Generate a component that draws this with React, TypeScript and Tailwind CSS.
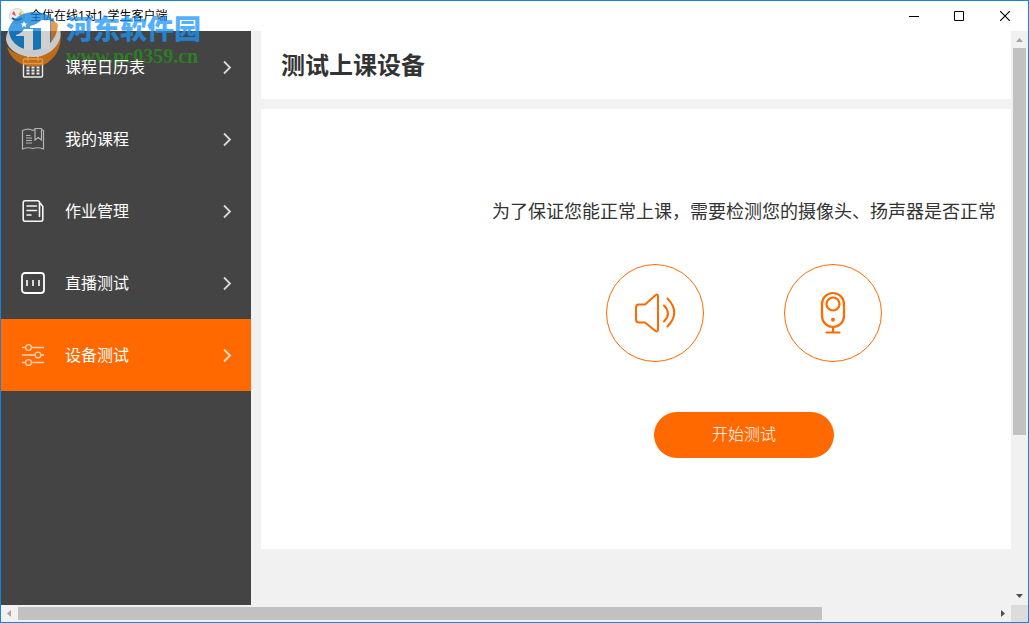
import type { ReactNode } from "react";

const icon = "h-6 w-6 shrink-0 fill-none stroke-current";

function CalendarIcon() {
  return (
    <svg viewBox="0 0 24 24" className={icon} strokeWidth="1.4" opacity="0.9" aria-hidden="true">
      <rect x="2.500" y="4" width="19" height="18" rx="1" />
      <path d="M2.500 8.500H21.500M7 1V6M17 1V6" />
      <path d="M5.500 12.500H8.500M10.500 12.500H13.500M15.500 12.500H18.500M5.500 15.500H8.500M10.500 15.500H13.500M15.500 15.500H18.500M5.500 18.500H8.500M10.500 18.500H13.500M15.500 18.500H18.500" strokeWidth="2" />
    </svg>
  );
}

function BookIcon() {
  return (
    <svg viewBox="0 0 24 24" className={icon} strokeWidth="1.200" opacity="0.6" aria-hidden="true">
      <path d="M12 3.500C9 1.500 5 1.800 1.500 3.500V22C5 20.500 9 20.500 12 21.500C15 20.500 19 20.500 22.500 22V3.500L20.500 2.500M12 3.500L14 2.500" />
      <path d="M14 1.500H20.500V13L17.200 10.500L14 13Z" />
      <path d="M5 8.500H9.500M5 11H11M5 13.500H11M5 16H11" />
    </svg>
  );
}

function HomeworkIcon() {
  return (
    <svg viewBox="0 0 24 24" className={icon} strokeWidth="1.600" strokeLinecap="round" opacity="0.95" aria-hidden="true">
      <path d="M18.500 17.500V3.500Q18.500 1.800 16.500 1.800H4Q2.200 1.800 2.200 3.800V20.200Q2.200 22.200 4 22.200H20Q21.800 22.200 21.800 20.500V7.500L19 4" />
      <path d="M6 7H15.500M6 11.500H15.500M6 16H10" />
    </svg>
  );
}

function LiveIcon() {
  return (
    <svg viewBox="0 0 24 24" className={icon} aria-hidden="true">
      <rect x="1" y="2" width="22" height="20" rx="3" strokeWidth="1.800" />
      <path d="M6 9V15M12 9V15M18 9V15" strokeWidth="2" opacity="0.8" />
    </svg>
  );
}

function SlidersIcon() {
  return (
    <svg viewBox="0 0 24 24" className={icon} strokeWidth="1.300" opacity="0.7" aria-hidden="true">
      <path d="M1 4.500H5M10.500 4.500H23M1 12H14M19.500 12H23M1 19.500H5M10.500 19.500H23" />
      <circle cx="7.500" cy="4.500" r="2.900" />
      <circle cx="17" cy="12" r="2.900" />
      <circle cx="7.500" cy="19.500" r="2.900" />
    </svg>
  );
}

const items: { label: string; icon: ReactNode; active?: boolean }[] = [
  { label: "课程日历表", icon: <CalendarIcon /> },
  { label: "我的课程", icon: <BookIcon /> },
  { label: "作业管理", icon: <HomeworkIcon /> },
  { label: "直播测试", icon: <LiveIcon /> },
  { label: "设备测试", icon: <SlidersIcon />, active: true },
];

function TitleBar() {
  return (
    <header className="flex h-[30px] shrink-0 items-center bg-white pl-2">
      <svg viewBox="0 0 16 16" className="h-4 w-4" aria-hidden="true">
        <circle cx="8" cy="8" r="7.500" fill="#eeeeee" stroke="#d5d5d5" />
        <path d="M3 6L7 8L5 3Z" fill="#e5463c" />
        <path d="M9 6L13 3L12 8Z" fill="#f2b632" />
        <path d="M3 10Q8 14 13 10" stroke="#31548f" strokeWidth="2" fill="none" />
      </svg>
      <span className="ml-[5px] font-['Noto_Sans','Noto_Sans_CJK_SC',sans-serif] text-xs text-black">全优在线1对1-学生客户端</span>
      <div className="ml-auto flex h-full">
        <button type="button" aria-label="最小化" className="flex w-11 items-center justify-center">
          <svg viewBox="0 0 10 10" className="h-2.5 w-2.5" aria-hidden="true"><path d="M0 5.500H10" stroke="#000" /></svg>
        </button>
        <button type="button" aria-label="最大化" className="flex w-[46px] items-center justify-center">
          <svg viewBox="0 0 10 10" className="h-2.5 w-2.5" aria-hidden="true"><path d="M.5.5H9.500V9.500H.5Z" stroke="#000" fill="none" /></svg>
        </button>
        <button type="button" aria-label="关闭" className="flex w-[46px] items-center justify-center">
          <svg viewBox="0 0 10 10" className="h-2.5 w-2.5" aria-hidden="true"><path d="M0 0L10 10M10 0L0 10" stroke="#000" strokeWidth="1.200" /></svg>
        </button>
      </div>
    </header>
  );
}

function Watermark() {
  return (
    <div className="pointer-events-none absolute top-2 left-1 flex opacity-75">
      <svg viewBox="0 0 60 60" className="h-[60px] w-[60px] shrink-0" aria-hidden="true">
        <path d="M2 28C3 12 15 3 29 3C39 3 46 7 50 13L46 42C34 50 10 48 2 28Z" fill="#0a80d8" />
        <path d="M46 12L52 14C61 30 53 50 38 56C22 61 6 53 2 38C14 50 34 50 46 38Z" fill="#e67a0c" />
        <path d="M4 21C4 33 16 42 29 41C42 40 52 31 53 15C62 31 46 48 29 48C14 48 3 41 1 31Q1 25 4 21Z" fill="#f4f8fb" />
        <path d="M11 26Q17 24 19 20H28V41H19V27H11ZM25 17Q33 15 36 11H45V40H36V19H25Z" fill="#fff" />
        <path d="M19 12L20 14.500H22.500L20.500 16L21.200 18.500L19 17L16.800 18.500L17.500 16L15.500 14.500H18Z" fill="#fff" />
      </svg>
      <div className="ml-px pt-[5px] font-black whitespace-nowrap">
        <div className="font-['Liberation_Serif','Noto_Sans_CJK_SC',serif] text-[27px] leading-8 text-[#1c96fa]">河东软件园</div>
        <div className="font-['Liberation_Serif',serif] text-xl leading-5 text-[#24901a]">www.pc0359.cn</div>
      </div>
    </div>
  );
}

function Sidebar() {
  return (
    <nav className="w-[250px] shrink-0 bg-[#444444]">
      {items.map((item) => (
        <a
          key={item.label}
          href="#"
          aria-current={item.active ? "page" : undefined}
          className={`flex h-[72px] items-center pr-[18px] pl-5 text-base text-white ${item.active ? "bg-[#ff6900]" : ""}`}
        >
          {item.icon}
          <span className="relative z-10 ml-5 pt-0.5">{item.label}</span>
          <svg viewBox="0 0 12 16" className="ml-auto h-4 w-3 fill-none stroke-white/80" strokeWidth="1.800" aria-hidden="true">
            <path d="M3 2.500L9 8.500L3 14.500" />
          </svg>
        </a>
      ))}
    </nav>
  );
}

function SpeakerIcon() {
  return (
    <svg viewBox="0 0 48 48" className="h-12 w-12 fill-none stroke-current" strokeWidth="2" strokeLinecap="round" strokeLinejoin="round" aria-hidden="true">
      <path d="M8 15.500H14L24.500 6.200Q27 4.500 27 7.500V40Q27 43.500 24.500 42L14 33.500H8Q5 33.500 5 30.500V18.500Q5 15.500 8 15.500Z" />
      <path d="M33 16.500Q41 24.500 33 32.500M36.500 9.500Q50 23.500 36.500 37.500" />
    </svg>
  );
}

function CameraIcon() {
  return (
    <svg viewBox="0 0 48 48" className="h-12 w-12 fill-none stroke-current" strokeWidth="2.200" strokeLinecap="round" aria-hidden="true">
      <rect x="13" y="4" width="22" height="34" rx="11" />
      <circle cx="24" cy="15" r="6.500" />
      <circle cx="24" cy="30.800" r="2" className="fill-current stroke-none" />
      <path d="M24 38V43.500M17.500 43.500H30.500" />
    </svg>
  );
}

function DeviceButton({ label, children }: { label: string; children: ReactNode }) {
  return (
    <button type="button" aria-label={label} className="flex h-[98px] w-[98px] items-center justify-center rounded-full border border-[#ff6900] text-[#ff6900]">
      {children}
    </button>
  );
}

function Arrow({ d, muted }: { d: string; muted?: boolean }) {
  return (
    <svg viewBox="0 0 17 17" className={`h-[17px] w-[17px] shrink-0 ${muted ? "fill-[#a3a3a3]" : "fill-[#505050]"}`} aria-hidden="true">
      <path d={d} />
    </svg>
  );
}

export default function App() {
  return (
    <div className="relative flex h-screen flex-col overflow-hidden border border-[#1883d7] bg-[#f1f1f1] font-['Liberation_Sans','Noto_Sans_CJK_SC',sans-serif]">
      <TitleBar />
      <div className="flex min-h-0 flex-1">
        <Sidebar />
        <main className="min-w-0 flex-1 overflow-hidden pl-2.5">
          <div className="min-w-[966px]">
            <h1 className="flex h-[68px] items-center bg-white px-5 pt-0.5 text-2xl font-bold text-[#333333]">测试上课设备</h1>
            <section className="mt-2.5 flex h-[440px] flex-col items-center bg-white pt-[89px]">
              <p className="text-lg leading-7 text-[#333333]">为了保证您能正常上课，需要检测您的摄像头、扬声器是否正常</p>
              <div className="mt-[38px] flex gap-20">
                <DeviceButton label="扬声器"><SpeakerIcon /></DeviceButton>
                <DeviceButton label="摄像头"><CameraIcon /></DeviceButton>
              </div>
              <button type="button" className="mt-[50px] h-[46px] w-[180px] rounded-full bg-[#ff6900] text-base font-light text-white">开始测试</button>
            </section>
          </div>
        </main>
        <div className="flex w-[17px] shrink-0 flex-col items-center bg-[#f1f1f1]">
          <Arrow d="M5 11H12L8.500 7Z" muted />
          <div className="flex w-full flex-1 flex-col px-0.5">
            <div className="h-[71.7%] bg-[#c1c1c1]" />
          </div>
          <Arrow d="M5 6H12L8.500 10Z" />
        </div>
      </div>
      <div className="flex h-[17px] shrink-0 bg-[#f1f1f1]">
        <Arrow d="M10 5V12L6 8.500Z" muted />
        <div className="flex-1 py-0.5">
          <div className="h-full w-[82.4%] bg-[#c1c1c1]" />
        </div>
        <Arrow d="M7 5V12L11 8.500Z" />
        <div className="w-[17px] bg-[#dcdcdc]" />
      </div>
      <Watermark />
    </div>
  );
}
